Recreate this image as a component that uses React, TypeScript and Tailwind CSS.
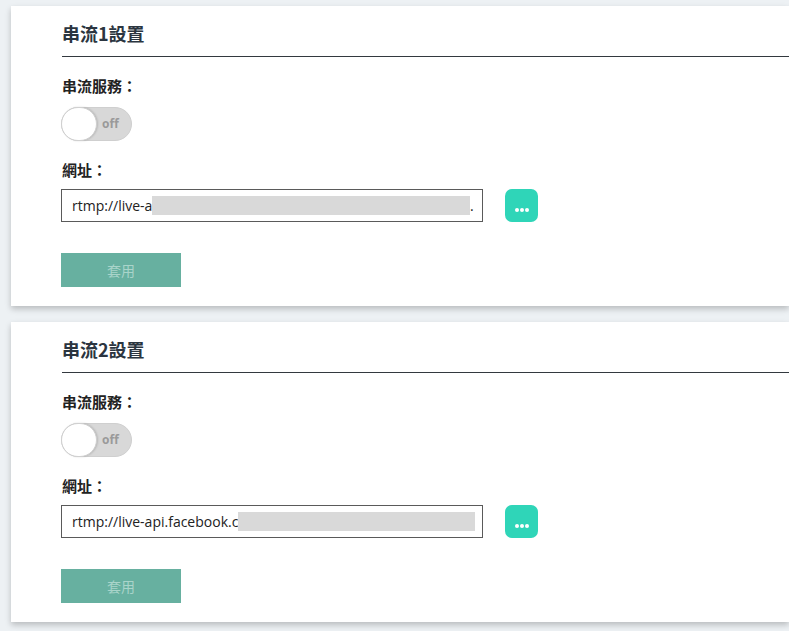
import React from "react";

const font = { fontFamily: '"Noto Sans CJK TC", "Noto Sans", sans-serif' };

function Toggle() {
  return (
    <div className="relative mt-[11px] h-[34px] w-[71px] rounded-full border border-[#cfcfcf] bg-[#d8d8d8]">
      <div className="absolute left-[-1px] top-[-1px] h-[34px] w-[36px] rounded-full border border-[#d0d0d0] bg-white shadow-[1px_0_2px_rgba(0,0,0,0.15)]" />
      <span
        className="absolute left-[40px] top-0 text-[12px] font-bold leading-[32px] text-[#9a9a9a]"
        style={{ fontFamily: '"Open Sans", sans-serif' }}
      >
        off
      </span>
    </div>
  );
}

function Card({
  title,
  prefix,
  grayStart,
  grayWidth,
  tail,
}: {
  title: string;
  prefix: string;
  grayStart: number;
  grayWidth: number;
  tail?: string;
}) {
  return (
    <div className="ml-[11px] bg-white pl-[50px] pt-[13px] pb-[19px] shadow-[0_3px_6px_rgba(0,0,0,0.22)]" style={font}>
      <div className="h-[28px] pl-[1px] text-[18px] font-bold leading-[28px] text-[#2b3540]">{title}</div>
      <div className="ml-[1px] mt-[9px] h-px bg-[#33393f]" />
      <div className="mt-[19px] h-[20px] pl-[1px] text-[15px] font-bold leading-[20px] text-[#222]">串流服務：</div>
      <Toggle />
      <div className="mt-[19px] h-[20px] pl-[1px] text-[15px] font-bold leading-[20px] text-[#222]">網址：</div>
      <div className="mt-[9px] flex items-center">
        <div className="relative h-[33px] w-[422px] overflow-hidden border border-[#5a5a5a] bg-white">
          <span
            className="absolute left-[10px] top-0 text-[14px] leading-[31px] text-[#222]"
            style={{ fontFamily: '"Open Sans", sans-serif' }}
          >
            {prefix}
          </span>
          <div
            className="absolute top-[6px] h-[19px] bg-[#d9d9d9]"
            style={{ left: grayStart, width: grayWidth }}
          />
          {tail ? (
            <span
              className="absolute top-0 text-[14px] leading-[31px] text-[#222]"
              style={{ left: grayStart + grayWidth, fontFamily: '"Open Sans", sans-serif' }}
            >
              {tail}
            </span>
          ) : null}
        </div>
        <div className="ml-[22px] flex h-[33px] w-[33px] items-end justify-center rounded-[7px] bg-[#2fd5b8] pb-[10px]">
          <div className="flex gap-[1px]">
            <div className="h-[4px] w-[4px] rounded-full bg-white" />
            <div className="h-[4px] w-[4px] rounded-full bg-white" />
            <div className="h-[4px] w-[4px] rounded-full bg-white" />
          </div>
        </div>
      </div>
      <div className="mt-[31px] flex h-[34px] w-[120px] items-center justify-center bg-[#67b0a0] text-[14px] text-[#a9d4ca]">
        套用
      </div>
    </div>
  );
}

export default function App() {
  return (
    <div className="min-h-[631px] w-full overflow-hidden bg-[#edf1f4] pt-[6px] pb-[9px]">
      <Card title="串流1設置" prefix="rtmp://live-a" grayStart={90} grayWidth={318} tail="." />
      <div className="h-[16px]" />
      <Card title="串流2設置" prefix="rtmp://live-api.facebook.c" grayStart={176} grayWidth={237} />
    </div>
  );
}
